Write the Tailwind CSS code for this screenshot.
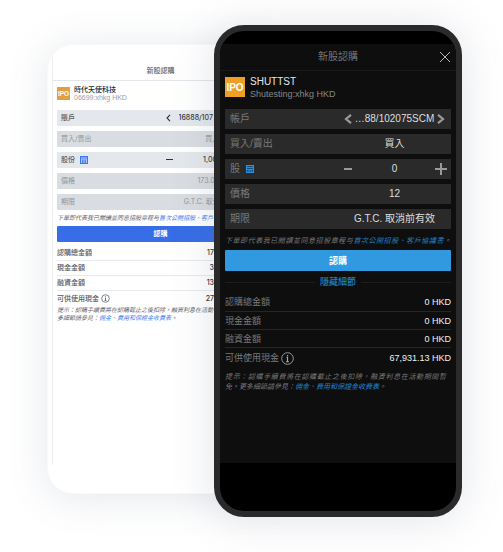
<!DOCTYPE html>
<html lang="zh-Hant">
<head>
<meta charset="utf-8">
<meta name="viewport" content="width=device-width, initial-scale=1">
<title>新股認購</title>
<script src="https://cdn.jsdelivr.net/npm/@tailwindcss/browser@4"></script>
</head>
<body class="bg-white font-['Liberation_Sans','Noto_Sans_CJK_TC',sans-serif]">
<main class="flex min-h-screen items-start overflow-hidden pt-[25px] pr-[41px] pb-[35px] pl-[47px]">

  <!-- Light theme phone -->
  <section class="mt-[19px] flex min-h-[450px] w-[226px] shrink-0 flex-col overflow-hidden rounded-[26px] border border-[#f8f9fa] bg-white px-[4px] pt-[5px] font-[Inter,'Noto_Sans_CJK_TC',sans-serif] text-[7px] leading-[10px] font-medium text-[#555a63] shadow-[0_4px_40px_rgba(90,105,130,0.16)]">
    <div class="mb-[28px] flex grow flex-col border-l border-[#eceef0]">
      <header class="flex h-[31px] items-end justify-center border-b border-[#e2e5e9] pb-[4px]">
        <h2 class="text-[#5b616b]">新股認購</h2>
      </header>
      <form class="flex flex-col px-[4px]">
        <div class="mt-[4px] mb-[8px] flex h-[17px] items-center gap-[4px]">
          <svg class="size-[13px] shrink-0" viewBox="0 0 20 20" role="img" aria-label="IPO"><rect width="20" height="20" fill="#dfa042"/><text x="10" y="14" text-anchor="middle" font-family="Liberation Sans" font-weight="bold" font-size="10" fill="#fff">IPO</text></svg>
          <div class="leading-[8px]">
            <h3 class="text-[#22262c]">時代天使科技</h3>
            <p class="font-['Liberation_Sans',sans-serif] font-normal text-[#9a9ea5]">06699:xhkg HKD</p>
          </div>
        </div>
        <div class="flex flex-col gap-[5px]">
          <div class="grid h-[16px] grid-cols-2 items-center rounded-[1px] bg-[#e4e8ec]">
            <label for="l-account" class="pl-[4px]">賬戶</label>
            <div class="flex items-center pl-[5px]">
              <button type="button" aria-label="上一個" class="shrink-0"><svg class="h-[8px] w-[5px]" viewBox="0 0 5 8" fill="none" stroke="#30343a" stroke-width="1.100"><path d="M4 .8 1 4l3 3.200"/></svg></button>
              <select id="l-account" class="w-full min-w-0 appearance-none pl-[8px] text-[#353a42]"><option>16888/107</option></select>
            </div>
          </div>
          <div class="grid h-[16px] grid-cols-2 items-center rounded-[1px] bg-[#d9dde1] font-normal text-[#90959c]">
            <label for="l-side" class="pl-[4px]">買入/賣出</label>
            <select id="l-side" class="appearance-none text-center [text-align-last:center]"><option>買入</option></select>
          </div>
          <div class="grid h-[16px] grid-cols-2 items-center rounded-[1px] bg-[#e4e8ec]">
            <div class="flex items-center gap-[5px] pl-[4px]">
              <label for="l-qty">股份</label>
              <svg class="size-[8px]" viewBox="0 0 8 8" fill="none" stroke="#3c78f0"><rect x=".5" y=".5" width="7" height="7" fill="#a9c4fa"/><path d="M1 2h6M2.500 3.500v4M4 3.500v4M5.500 3.500v4" stroke-width=".8"/></svg>
            </div>
            <div class="flex items-center pl-[5px]">
              <button type="button" aria-label="減少" class="shrink-0"><svg class="h-[8px] w-[7px]" viewBox="0 0 7 8" stroke="#30343a"><path d="M0 3.500h7"/></svg></button>
              <input id="l-qty" type="text" value="1,000" class="w-full min-w-0 pr-[12px] text-center text-[#353a42]">
            </div>
          </div>
          <div class="grid h-[16px] grid-cols-2 items-center rounded-[1px] bg-[#d9dde1] font-normal text-[#90959c]">
            <label for="l-price" class="pl-[4px]">價格</label>
            <input id="l-price" type="text" value="173.00" class="w-full min-w-0 pr-[8px] text-center">
          </div>
          <div class="grid h-[16px] grid-cols-2 items-center rounded-[1px] bg-[#d9dde1] font-normal text-[#90959c]">
            <label for="l-tif" class="pl-[4px]">期限</label>
            <select id="l-tif" class="appearance-none text-center [text-align-last:center]"><option>G.T.C. 取消前有效</option></select>
          </div>
        </div>
        <p class="my-[3px] text-[6px] leading-[10px] font-normal whitespace-nowrap text-[#5f646c] italic">下單即代表我已閱讀並同意招股章程与<a href="#" class="text-[#3d7df0]">首次公開招股、客戶</a></p>
        <button type="button" class="h-[16px] rounded-[1px] bg-[#376de6] font-bold text-white">認購</button>
        <dl class="mt-[4px] divide-y divide-[#e8eaed] [&_dd]:pr-[50px] [&_dd]:text-[#30343a]">
          <div class="flex h-[15px] items-center justify-between"><dt>認購總金額</dt><dd>17</dd></div>
          <div class="flex h-[15px] items-center justify-between"><dt>現金金額</dt><dd>3</dd></div>
          <div class="flex h-[15px] items-center justify-between"><dt>融資金額</dt><dd>13</dd></div>
          <div class="flex h-[15px] items-center justify-between"><dt class="flex items-center gap-[2px]">可供使用現金<svg class="size-[9px]" viewBox="0 0 13 13" fill="none" stroke="#4b5058"><circle cx="6.500" cy="6.500" r="5.500"/><path d="M6.500 3.200v1.400M5.500 5.800h1v3.500M5.200 9.500h2.600" stroke-width="1.100"/></svg></dt><dd>27</dd></div>
        </dl>
        <p class="text-[6px] leading-[8px] font-normal whitespace-nowrap text-[#5f646c] italic">提示：認購手續費將在認購截止之後扣除，融資利息在活動<br>多細節請參見：<a href="#" class="text-[#3d7df0]">佣金、費用和保證金收費表</a>。</p>
      </form>
    </div>
  </section>

  <!-- Dark theme phone -->
  <section class="z-10 -ml-[59px] flex min-h-[492px] min-w-[248px] grow flex-col overflow-hidden rounded-[30px] border-[6px] border-[#2a2a2a] bg-black pt-[13px] pb-[48px] text-[10px] leading-[14px] text-[#77797b] shadow-[0_2px_44px_rgba(90,100,130,0.18)]">
    <div class="flex grow flex-col bg-[#0e0e0e]">
      <header class="grid h-[27px] grid-cols-[16px_1fr_16px] items-center border-b border-[#191919] px-[5px]">
        <h1 class="col-start-2 text-center">新股認購</h1>
        <button type="button" aria-label="關閉" class="justify-self-end"><svg class="size-[12px]" viewBox="0 0 12 12" stroke="#b8b8b8"><path d="m1 1 10 10M11 1 1 11"/></svg></button>
      </header>
      <form class="flex flex-col px-[5px]">
        <div class="mt-[6px] mb-[12px] flex h-[20px] items-center gap-[5px]">
          <svg class="size-[20px] shrink-0" viewBox="0 0 20 20" role="img" aria-label="IPO"><rect width="20" height="20" fill="#ee9f26"/><text x="10" y="14" text-anchor="middle" font-family="Liberation Sans" font-weight="bold" font-size="10" fill="#fff">IPO</text></svg>
          <div class="pt-[2px] leading-[12px]">
            <h2 class="text-[#e6e6e6]">SHUTTST</h2>
            <p class="text-[9px] text-[#85878a]">Shutesting:xhkg HKD</p>
          </div>
        </div>
        <div class="flex flex-col gap-[5px]">
          <div class="grid h-[20px] grid-cols-2 items-center bg-[#2a2a2a]">
            <label for="d-account" class="pl-[5px]">帳戶</label>
            <div class="flex items-center pr-[6px] pl-[6px]">
              <button type="button" aria-label="上一個" class="shrink-0"><svg class="h-[10px] w-[8px]" viewBox="0 0 8 10" fill="none" stroke="#9a9a9a" stroke-width="2.200"><path d="M7 .8 2 5l5 4.200"/></svg></button>
              <select id="d-account" class="w-full min-w-0 appearance-none text-center text-[#dedede] [text-align-last:center]"><option>…88/102075SCM</option></select>
              <button type="button" aria-label="下一個" class="shrink-0"><svg class="h-[10px] w-[8px]" viewBox="0 0 8 10" fill="none" stroke="#9a9a9a" stroke-width="2.200"><path d="m1 .8 5 4.200-5 4.200"/></svg></button>
            </div>
          </div>
          <div class="grid h-[20px] grid-cols-2 items-center bg-[#2a2a2a]">
            <label for="d-side" class="pl-[5px]">買入/賣出</label>
            <select id="d-side" class="appearance-none text-center text-[#dedede] [text-align-last:center]"><option>買入</option></select>
          </div>
          <div class="grid h-[20px] grid-cols-2 items-center bg-[#2a2a2a]">
            <div class="flex items-center gap-[6px] pl-[5px]">
              <label for="d-qty">股</label>
              <svg class="size-[8px]" viewBox="0 0 8 8" fill="none" stroke="#2f92e0"><rect x=".5" y=".5" width="7" height="7" fill="#14507f"/><path d="M1 2.500h6M1 4.500h6M3 4.500v3M5 4.500v3" stroke-width=".9"/></svg>
            </div>
            <div class="flex items-center pr-[4px] pl-[4px]">
              <button type="button" aria-label="減少" class="shrink-0"><svg class="size-[12px]" viewBox="0 0 12 12" stroke="#9a9a9a" stroke-width="2"><path d="M2 6h8"/></svg></button>
              <input id="d-qty" type="text" value="0" class="w-full min-w-0 text-center text-[#dedede]">
              <button type="button" aria-label="增加" class="shrink-0"><svg class="size-[12px]" viewBox="0 0 12 12" stroke="#9a9a9a" stroke-width="2"><path d="M0 6h12M6 0v12"/></svg></button>
            </div>
          </div>
          <div class="grid h-[20px] grid-cols-2 items-center bg-[#2a2a2a]">
            <label for="d-price" class="pl-[5px]">價格</label>
            <input id="d-price" type="text" value="12" class="w-full min-w-0 text-center text-[#dedede]">
          </div>
          <div class="grid h-[20px] grid-cols-2 items-center bg-[#2a2a2a]">
            <label for="d-tif" class="pl-[5px]">期限</label>
            <select id="d-tif" class="appearance-none text-center text-[#dedede] [text-align-last:center]"><option>G.T.C. 取消前有效</option></select>
          </div>
        </div>
        <p class="mt-[7px] mb-[4px] text-[7px] leading-[10px] text-[#77797b] italic [text-align-last:justify]">下單即代表我已閱讀並同意招股章程与<a href="#" class="text-[#1f86d2]">首次公開招股、客戶協議書</a>。</p>
        <button type="button" class="h-[21px] rounded-[1px] bg-[#3099e0] text-[9px] font-bold text-white">認購</button>
        <div class="mt-[4px] flex h-[14px] items-center gap-[5px]">
          <span class="h-px grow bg-[#1d1d1d]"></span>
          <button type="button" class="text-[9px] font-medium text-[#1f80c8]">隱藏細節</button>
          <span class="h-px grow bg-[#1d1d1d]"></span>
        </div>
        <dl class="mt-[4px] divide-y divide-[#262626] text-[9px] [&_dd]:text-[#f0f0f0]">
          <div class="flex h-[19px] items-center justify-between"><dt>認購總金額</dt><dd>0 HKD</dd></div>
          <div class="flex h-[18px] items-center justify-between"><dt>現金金額</dt><dd>0 HKD</dd></div>
          <div class="flex h-[18px] items-center justify-between"><dt>融資金額</dt><dd>0 HKD</dd></div>
          <div class="flex h-[20px] items-center justify-between"><dt class="flex items-center gap-[2px]">可供使用現金<svg class="size-[13px]" viewBox="0 0 13 13" fill="none" stroke="#a5a7a9"><circle cx="6.500" cy="6.500" r="5.800" stroke-width=".9"/><path d="M6.500 3v1.400M5.500 5.500h1v4M5.200 9.600h2.600" stroke-width="1.200"/></svg></dt><dd>67,931.13 HKD</dd></div>
        </dl>
        <p class="mt-[4px] pr-[5px] text-[7px] leading-[10px] text-[#77797b] italic"><span class="block [text-align-last:justify]">提示：認購手續費將在認購截止之後扣除，融資利息在活動期間暫</span>免。更多細節請參見：<a href="#" class="text-[#1f86d2]">佣金、費用和保證金收費表</a>。</p>
      </form>
    </div>
  </section>
</main>
</body>
</html>
